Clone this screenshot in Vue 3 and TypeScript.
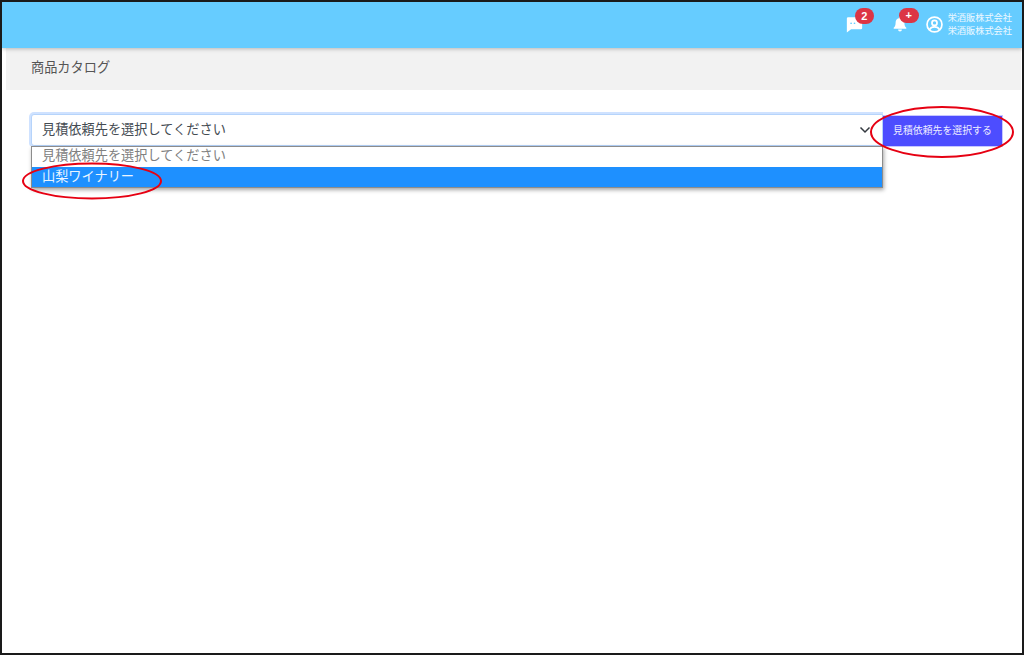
<script setup lang="ts">
const caption = '見積依頼先を選択してください'
const options = [caption, '山梨ワイナリー']
const company = '栄酒販株式会社'
</script>

<template>
  <div class="frame">
    <header class="topbar">
      <div class="icon-wrap msg">
        <svg width="17" height="17" viewBox="0 0 20 20"><path fill="#fff" d="M2.500 1.500h15a1.500 1.500 0 0 1 1.500 1.500v11a1.500 1.500 0 0 1-1.500 1.500H6L1 19.500V3a1.500 1.500 0 0 1 1.500-1.500z"/><circle cx="6" cy="8.500" r="1" fill="#66ccff"/><circle cx="10" cy="8.500" r="1" fill="#66ccff"/></svg>
        <span class="badge">2</span>
      </div>
      <div class="icon-wrap bell">
        <svg width="14" height="16" viewBox="0 0 16 18"><path fill="#fff" d="M8 0.500a1.300 1.300 0 0 1 1.300 1.300v.6A5 5 0 0 1 13 7.300c0 3.700 1 4.700 2.200 6v1H.8v-1C2 12 3 11 3 7.300a5 5 0 0 1 3.700-4.900v-.6A1.300 1.300 0 0 1 8 .5z"/><path fill="#fff" d="M5.800 15.300h4.400a2.200 2.200 0 0 1-4.400 0z"/></svg>
        <span class="badge">+</span>
      </div>
      <svg class="user" width="17" height="17" viewBox="0 0 18 18" fill="none" stroke="#fff" stroke-width="1.800"><circle cx="9" cy="9" r="7.900"/><circle cx="9" cy="7.300" r="2.700"/><path d="M3.800 14.500c1-2 3-2.900 5.200-2.900s4.200.9 5.200 2.900"/></svg>
      <div class="company"><div>{{ company }}</div><div>{{ company }}</div></div>
    </header>
    <div class="crumb">商品カタログ</div>
    <main class="content">
      <div class="row">
        <div class="select-box">
          <div class="select">
            <span>{{ caption }}</span>
            <svg width="12" height="8" viewBox="0 0 12 8" fill="none" stroke="#343a40" stroke-width="1.500"><path d="M1.500 1.500 6 6l4.500-4.500"/></svg>
          </div>
          <ul class="list">
            <li v-for="(o, i) in options" :key="o" :class="{ active: i === 1 }">{{ o }}</li>
          </ul>
        </div>
        <button class="pick" type="button">{{ caption.replace('してください', 'する') }}</button>
      </div>
    </main>
    <svg class="marks" width="1024" height="655" viewBox="0 0 1024 655" fill="none" stroke="#e60012" stroke-width="2">
      <ellipse cx="92" cy="181" rx="69" ry="17.500"/>
      <ellipse cx="942" cy="132" rx="71" ry="25"/>
    </svg>
  </div>
</template>

<style>
html, body { margin: 0; background: #fff; }
</style>

<style scoped>
.frame {
  position: relative;
  width: 1024px;
  height: 655px;
  box-sizing: border-box;
  border: 2px solid #1a1a1a;
  padding-left: 4px;
  padding-right: 1px;
  display: flex;
  flex-direction: column;
  overflow: hidden;
  background: #fff;
  font-family: "Liberation Sans", "Noto Sans CJK JP", sans-serif;
  color: #495057;
}
.topbar {
  height: 46px;
  margin-left: -4px;
  margin-right: -1px;
  flex: none;
  background: #66ccff;
  box-shadow: 0 1px 4px rgba(0,0,0,.25);
  display: flex;
  align-items: center;
  justify-content: flex-end;
  padding-right: 10px;
  color: #fff;
  position: relative;
  z-index: 1;
}
.icon-wrap { position: relative; display: flex; }
.msg { margin-right: 30px; top: -1px; }
.bell { margin-right: 19px; top: -1px; }
.badge {
  position: absolute;
  border-radius: 8px;
  background: #dc3545;
  color: #fff;
  font-size: 11px;
  font-weight: 700;
  text-align: center;
}
.msg .badge { left: 9px; top: -8px; width: 19px; height: 16px; line-height: 16px; }
.bell .badge { left: 6px; top: -8px; width: 20px; height: 15px; line-height: 15px; }
.user { margin-right: 5px; top: -1px; position: relative; }
.company { font-size: 9.200px; line-height: 13px; white-space: nowrap; color: #eef9ff; }
.crumb {
  height: 42px;
  flex: none;
  background: #f2f2f2;
  box-sizing: border-box;
  padding: 11px 0 0 25px;
  font-size: 13.200px;
  line-height: 18px;
  color: #555;
}
.content { padding: 24px 19px 0 25px; flex: 1; }
.row { display: flex; align-items: flex-start; }
.select-box { position: relative; width: 852px; }
.select {
  height: 32px;
  box-sizing: border-box;
  background: #fff;
  border: 1px solid #b6d4fb;
  box-shadow: 0 0 0 2px #cfe2ff;
  border-radius: 3px 0 0 3px;
  clip-path: inset(-3px 0 0 -3px);
  display: flex;
  align-items: center;
  justify-content: space-between;
  padding: 0 11px 3px 10px;
  font-size: 13.200px;
  color: #444b52;
}
.select svg { margin-top: 3px; }
.list {
  position: absolute;
  top: 32px;
  left: 0;
  right: 0;
  margin: 0;
  padding: 0;
  list-style: none;
  background: #fff;
  border: 1px solid #8c8c8c;
  box-shadow: 1px 2px 4px rgba(0,0,0,.35);
  font-size: 13.200px;
}
.list li { height: 20px; line-height: 18px; padding-left: 10px; color: #808080; }
.list li.active { height: 20px; line-height: 19px; background: #1e90ff; color: #eaf5ff; }
.pick {
  width: 119px;
  height: 30px;
  margin-top: 2px;
  border: 0;
  padding: 0 0 2px;
  background: #4d4dff;
  color: #eeeeff;
  font: inherit;
  font-size: 9.900px;
  box-shadow: 0 0 0 1px #c7c7ff;
}
.marks { position: absolute; left: -2px; top: -2px; pointer-events: none; z-index: 5; }
</style>
